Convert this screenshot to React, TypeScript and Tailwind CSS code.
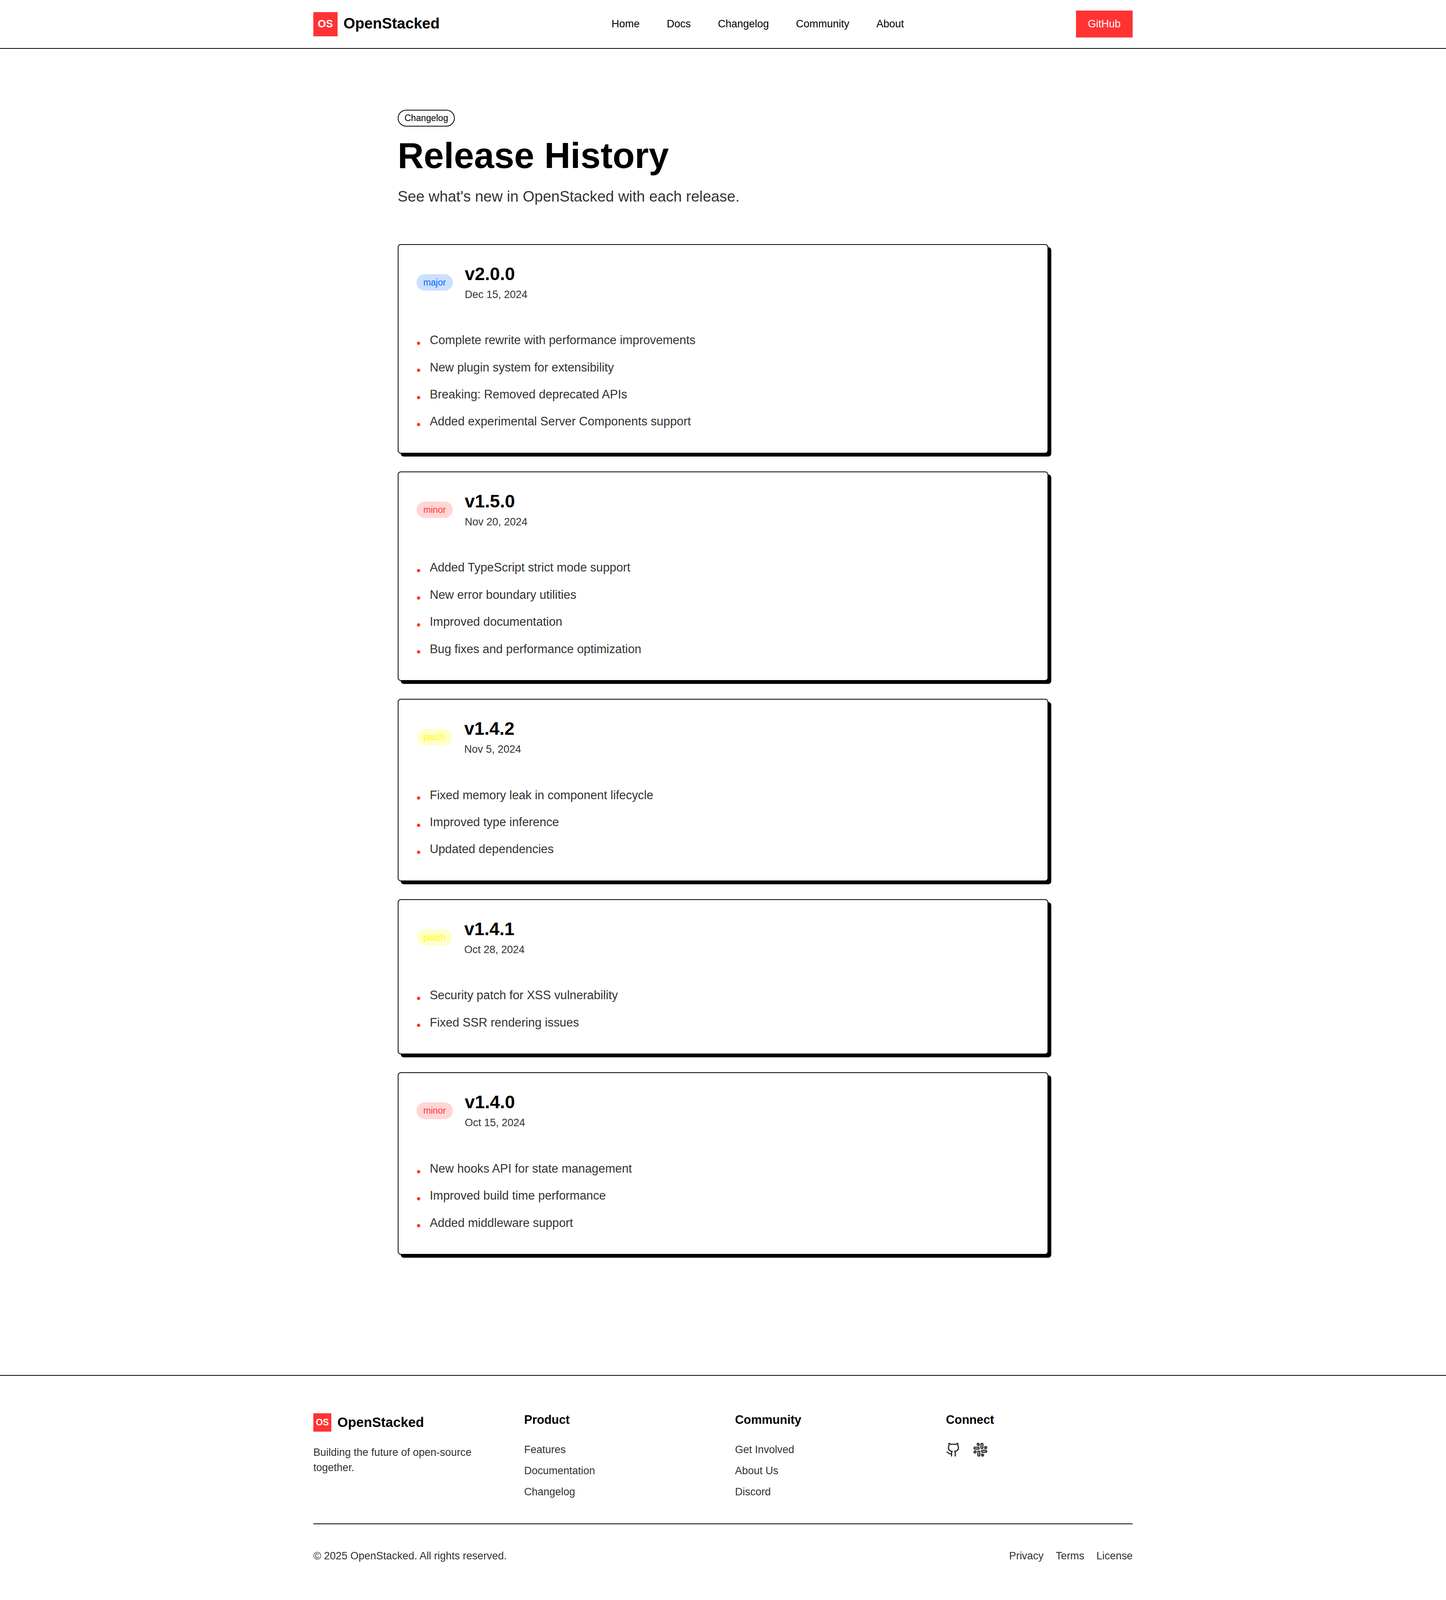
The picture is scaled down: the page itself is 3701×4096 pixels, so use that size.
import { Github, Slack } from "lucide-react";

type ReleaseKind = "major" | "minor" | "patch";

interface Release {
  version: string;
  date: string;
  kind: ReleaseKind;
  changes: string[];
}

const navLinks = ["Home", "Docs", "Changelog", "Community", "About"];

const releases: Release[] = [
  {
    version: "v2.0.0",
    date: "Dec 15, 2024",
    kind: "major",
    changes: [
      "Complete rewrite with performance improvements",
      "New plugin system for extensibility",
      "Breaking: Removed deprecated APIs",
      "Added experimental Server Components support",
    ],
  },
  {
    version: "v1.5.0",
    date: "Nov 20, 2024",
    kind: "minor",
    changes: [
      "Added TypeScript strict mode support",
      "New error boundary utilities",
      "Improved documentation",
      "Bug fixes and performance optimization",
    ],
  },
  {
    version: "v1.4.2",
    date: "Nov 5, 2024",
    kind: "patch",
    changes: [
      "Fixed memory leak in component lifecycle",
      "Improved type inference",
      "Updated dependencies",
    ],
  },
  {
    version: "v1.4.1",
    date: "Oct 28, 2024",
    kind: "patch",
    changes: ["Security patch for XSS vulnerability", "Fixed SSR rendering issues"],
  },
  {
    version: "v1.4.0",
    date: "Oct 15, 2024",
    kind: "minor",
    changes: [
      "New hooks API for state management",
      "Improved build time performance",
      "Added middleware support",
    ],
  },
];

const kindStyles: Record<ReleaseKind, string> = {
  major: "bg-[#0066ff]/20 text-[#0066ff]",
  minor: "bg-[#ff3333]/20 text-[#ff3333]",
  patch: "bg-[#ffff00]/20 text-[#ffff00]",
};

const footerColumns = [
  { title: "Product", links: ["Features", "Documentation", "Changelog"] },
  { title: "Community", links: ["Get Involved", "About Us", "Discord"] },
];

function ReleaseCard({ release }: { release: Release }) {
  return (
    <article className="rounded border-[1.04px] border-black bg-white p-6 shadow-[4px_4px_0_0_#000]">
      <div className="mb-[39px] flex items-center gap-4">
        <span
          className={`inline-flex items-center rounded-full border-[1.04px] border-transparent px-2 py-0.5 text-xs ${kindStyles[release.kind]}`}
        >
          {release.kind}
        </span>
        <div>
          <h2 className="mb-0.5 text-2xl leading-[30px] font-bold text-black">{release.version}</h2>
          <p className="text-sm text-[#333333]">{release.date}</p>
        </div>
      </div>
      <ul className="space-y-2 pb-px">
        {release.changes.map((change) => (
          <li key={change} className="flex items-start gap-3 text-[#333333]">
            <span className="mt-1 text-[#ff3333]">•</span>
            <span>{change}</span>
          </li>
        ))}
      </ul>
    </article>
  );
}

// The reference was taken at 1920 wide and 2x; zoom maps that onto the 3701 window.
// Border widths under zoom floor to whole pixels, hence 1.04px to keep them at 2.
export default function App() {
  return (
    <div className="bg-white font-['Liberation_Sans',Arial,sans-serif] text-black [zoom:1.9276]">
      <header className="border-b-[1.04px] border-black">
        <div className="mx-auto flex h-16 max-w-6xl items-center justify-between px-8">
          <div className="flex items-center gap-2">
            <div className="flex h-8 w-8 items-center justify-center bg-[#ff3333] text-sm font-bold text-white">
              OS
            </div>
            <span className="mb-[1.5px] text-xl font-bold">OpenStacked</span>
          </div>
          <nav className="flex items-center gap-9 text-sm">
            {navLinks.map((link) => (
              <a key={link} href="#">
                {link}
              </a>
            ))}
          </nav>
          <button className="bg-[#ff3333] px-4 py-2 text-sm text-white">GitHub</button>
        </div>
      </header>

      <main className="mx-auto max-w-4xl px-4 pt-20 pb-40">
        <div className="mt-px mb-[9px] flex">
          <span className="inline-flex items-center rounded-full border-[1.04px] border-black px-2 py-0.5 text-xs">
            Changelog
          </span>
        </div>
        <h1 className="mb-[10px] text-5xl leading-[60px] font-bold">Release History</h1>
        <p className="mb-[49px] text-xl text-[#333333]">See what's new in OpenStacked with each release.</p>
        <div className="space-y-6">
          {releases.map((release) => (
            <ReleaseCard key={release.version} release={release} />
          ))}
        </div>
      </main>

      <footer className="border-t-[1.04px] border-black">
        <div className="mx-auto max-w-6xl px-8 py-12">
          <div className="mb-8 grid grid-cols-4 gap-8">
            <div>
              <div className="mb-4 flex h-7 items-center gap-2">
                <div className="flex h-6 w-6 items-center justify-center bg-[#ff3333] text-xs font-bold text-white">
                  OS
                </div>
                <span className="text-lg font-bold">OpenStacked</span>
              </div>
              <p className="text-sm text-[#333333]">Building the future of open-source together.</p>
            </div>
            {footerColumns.map((column) => (
              <div key={column.title}>
                <h3 className="mb-[19px] leading-[21px] font-bold">{column.title}</h3>
                <ul className="space-y-2 text-sm text-[#333333]">
                  {column.links.map((link) => (
                    <li key={link}>
                      <a href="#">{link}</a>
                    </li>
                  ))}
                </ul>
              </div>
            ))}
            <div>
              <h3 className="mb-[19px] leading-[21px] font-bold">Connect</h3>
              <div className="flex gap-4 text-[#333333]">
                <Github className="h-5 w-5" />
                <Slack className="h-5 w-5" />
              </div>
            </div>
          </div>
          <div className="flex items-center justify-between border-t-[1.04px] border-black pt-8 text-sm text-[#333333]">
            <p>© 2025 OpenStacked. All rights reserved.</p>
            <div className="flex gap-4">
              <a href="#">Privacy</a>
              <a href="#">Terms</a>
              <a href="#">License</a>
            </div>
          </div>
        </div>
      </footer>
    </div>
  );
}
